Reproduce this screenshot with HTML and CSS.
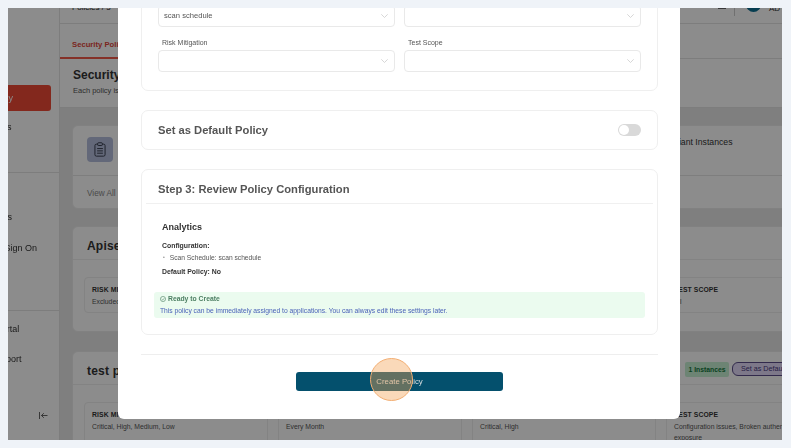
FILE: index.html
```html
<!DOCTYPE html>
<html lang="en">
<head>
<meta charset="utf-8">
<title>Create Security Policy</title>
<link rel="stylesheet" href="styles.css">
</head>
<body>
<div class="screen">
  <div class="app">
    <aside class="sidebar">
      <div class="logo">Apisec</div>
      <nav class="nav">
        <div class="nav-item nav-active">Security Policy</div>
        <div class="nav-item nav-analytics">Instances</div>
        <div class="nav-group">
          <div class="nav-item nav-users">Integrations</div>
          <div class="nav-item nav-sso">Single Sign On</div>
        </div>
        <div class="nav-group">
          <div class="nav-item nav-portal">Trust Portal</div>
          <div class="nav-item nav-support">Get Support</div>
        </div>
      </nav>
      <div class="collapse">
        <svg width="9" height="7" viewBox="0 0 9 7" fill="none" stroke="#3f3f3f" stroke-width="0.8"><path d="M0.5 0v7M8.5 3.5H2.5M4.8 1.2 2.5 3.5l2.3 2.3"/></svg>
      </div>
    </aside>
    <main class="main">
      <header class="topbar">
        <span class="crumb">Policies / 5</span>
        <div class="top-right">
          <span class="top-icon"></span>
          <span class="top-sep"></span>
          <span class="avatar"></span>
          <span class="top-name">AD</span>
        </div>
      </header>
      <div class="tabs"><span class="tab">Security Policies</span></div>
      <section class="intro">
        <h1 class="intro-title">Security Policies</h1>
        <p class="intro-sub">Each policy is applied to the assigned applications.</p>
      </section>
      <div class="content">
        <section class="card stat-card">
          <div class="stat-top">
            <span class="stat-icon">
              <svg width="12" height="15" viewBox="0 0 13 16" fill="none" stroke="#2f3444" stroke-width="1"><rect x="1" y="2.2" width="11" height="13" rx="1.6"/><rect x="4" y="0.7" width="5" height="3" rx="0.8" fill="#b4bedd"/><path d="M3.4 7h6.2M3.4 9.5h6.2M3.4 12h6.2"/></svg>
            </span>
            <span class="stat-label">Non-Compliant Instances</span>
          </div>
          <div class="stat-foot">View All</div>
        </section>
        <section class="card policy">
          <div class="policy-head"><h2 class="policy-title">Apisec Default</h2></div>
          <div class="cells">
            <div class="cell short"><div class="cell-key">RISK MITIGATION</div><div class="cell-val">Excluded</div></div>
            <div class="cell short"></div>
            <div class="cell short"></div>
            <div class="cell short"><div class="cell-key">TEST SCOPE</div><div class="cell-val">All</div></div>
          </div>
        </section>
        <section class="card policy">
          <div class="policy-head">
            <h2 class="policy-title">test policy</h2>
            <div class="policy-actions">
              <span class="badge">1 Instances</span>
              <span class="pill">Set as Default</span>
            </div>
          </div>
          <div class="cells">
            <div class="cell"><div class="cell-key">RISK MITIGATION</div><div class="cell-val">Critical, High, Medium, Low</div></div>
            <div class="cell"><div class="cell-key">&nbsp;</div><div class="cell-val">Every Month</div></div>
            <div class="cell"><div class="cell-key">&nbsp;</div><div class="cell-val">Critical, High</div></div>
            <div class="cell"><div class="cell-key">TEST SCOPE</div><div class="cell-val">Configuration issues, Broken authentication, Data exposure</div></div>
          </div>
        </section>
      </div>
    </main>
  </div>
  <div class="overlay"></div>
  <div class="modal">
    <section class="m-card form-card">
      <div class="form-grid">
        <div class="field">
          <div class="select"><span>scan schedule</span><svg class="chev" width="7" height="4" viewBox="0 0 7 4" fill="none" stroke="#cdcdcd" stroke-width="0.8"><path d="M0.3 0.3 3.5 3.5 6.7 0.3"/></svg></div>
        </div>
        <div class="field">
          <div class="select"><span></span><svg class="chev" width="7" height="4" viewBox="0 0 7 4" fill="none" stroke="#cdcdcd" stroke-width="0.8"><path d="M0.3 0.3 3.5 3.5 6.7 0.3"/></svg></div>
        </div>
        <div class="field">
          <label class="f-label">Risk Mitigation</label>
          <div class="select"><span></span><svg class="chev" width="7" height="4" viewBox="0 0 7 4" fill="none" stroke="#cdcdcd" stroke-width="0.8"><path d="M0.3 0.3 3.5 3.5 6.7 0.3"/></svg></div>
        </div>
        <div class="field">
          <label class="f-label">Test Scope</label>
          <div class="select"><span></span><svg class="chev" width="7" height="4" viewBox="0 0 7 4" fill="none" stroke="#cdcdcd" stroke-width="0.8"><path d="M0.3 0.3 3.5 3.5 6.7 0.3"/></svg></div>
        </div>
      </div>
    </section>
    <section class="m-card default-card">
      <h3 class="m-title">Set as Default Policy</h3>
      <span class="toggle"><span class="knob"></span></span>
    </section>
    <section class="m-card review-card">
      <h3 class="m-title review-title">Step 3: Review Policy Configuration</h3>
      <div class="review-body">
        <h4 class="r-name">Analytics</h4>
        <div class="r-bold">Configuration:</div>
        <ul class="r-list"><li>Scan Schedule: scan schedule</li></ul>
        <div class="r-bold r-default">Default Policy: No</div>
      </div>
      <div class="ready">
        <div class="ready-title">
          <svg width="6" height="6" viewBox="0 0 7 7" fill="none" stroke="#4d7f63" stroke-width="0.7"><circle cx="3.5" cy="3.5" r="3"/><path d="M2 3.6 3.1 4.7 5 2.6"/></svg>
          Ready to Create
        </div>
        <div class="ready-text">This policy can be immediately assigned to applications. You can always edit these settings later.</div>
      </div>
    </section>
    <footer class="m-footer">
      <button class="create" type="button">Create Policy</button>
    </footer>
  </div>
  <div class="spot"></div>
</div>
</body>
</html>
```
FILE: styles.css
```css
* { box-sizing: border-box; }
html, body { margin: 0; height: 100%; }
body {
  background: #eff3f8;
  padding: 8px 9px 8px 8px;
  font-family: "Liberation Sans", Arial, sans-serif;
  overflow: hidden;
}
h1, h2, h3, h4, p, ul { margin: 0; padding: 0; }

.screen {
  position: relative;
  width: 774px;
  height: 432px;
  overflow: hidden;
  filter: blur(0.35px);
}
.app { display: flex; width: 100%; height: 100%; background: #fff; }

/* sidebar */
.sidebar {
  position: relative;
  flex: 0 0 52px;
  border-right: 1px solid #e4e4e4;
  overflow: hidden;
  color: #333;
  font-size: 9px;
  white-space: nowrap;
}
.logo { margin: -14px 0 0 -20px; font-size: 15px; font-weight: 700; line-height: 17px; color: #222; }
.nav { margin-top: 74px; font-weight: 500; }
.nav-item { margin-left: -43px; line-height: 12px; }
.nav-active {
  display: flex;
  align-items: center;
  justify-content: flex-end;
  margin-left: -10px;
  width: 53px;
  height: 26px;
  padding-right: 38px;
  border-radius: 3px;
  background: #ef4a36;
  color: #fff;
  font-size: 9px;
}
.nav-analytics { margin-top: 10px; margin-left: -35px; }
.nav-group { margin-top: 39px; padding-bottom: 0; border-top: 1px solid #e4e4e4; width: 52px; }
.nav-users { margin-top: 38px; margin-left: -43px; }
.nav-sso { margin-top: 19px; margin-left: -31px; }
.nav-group + .nav-group { margin-top: 56px; }
.nav-portal { margin-top: 12px; margin-left: -35px; }
.nav-support { margin-top: 18px; margin-left: -35px; }
.collapse { position: absolute; left: 31px; top: 404px; line-height: 0; }

/* main */
.main { flex: 0 0 820px; color: #333; }
.topbar {
  display: flex;
  align-items: center;
  justify-content: space-between;
  height: 16px;
  border-bottom: 1px solid #e4e4e4;
  padding: 0 2px 0 12px;
  width: 722px;
  overflow: hidden;
}
.crumb { font-size: 8px; margin-top: -17px; font-weight: 500; }
.top-right { display: flex; align-items: center; gap: 8px; }
.top-icon { width: 8px; height: 1px; margin-top: -14px; background: #666; }
.top-sep { width: 1px; height: 11px; margin-top: -10px; background: #ccc; }
.avatar { width: 15px; height: 15px; margin: -23px 0 0 3px; border-radius: 50%; background: #0c6f92; }
.top-name { font-size: 8px; margin-top: -14px; margin-left: 0; }
.tabs { height: 35px; border-bottom: 1px solid #e4e4e4; }
.tab {
  display: block;
  width: 100px;
  height: 35px;
  padding: 15px 0 0 12px;
  border-bottom: 2px solid #f25a4a;
  color: #e0463a;
  font-size: 7.7px;
  font-weight: 700;
  line-height: 12px;
  white-space: nowrap;
}
.intro { height: 49px; padding: 7px 13px; border-bottom: 1px solid #e4e4e4; }
.intro-title { font-size: 12px; line-height: 18px; font-weight: 700; color: #333; }
.intro-sub { font-size: 7.5px; line-height: 12px; color: #555; margin-top: 1px; }
.content { background: #e8e8e8; padding: 17px 12px; }
.card { width: 790px; border: 1px solid #ececec; border-radius: 6px; background: #fff; }
.card + .card { margin-top: 17px; }
.policy + .policy { margin-top: 19px; }
.stat-card { height: 84px; display: flex; flex-direction: column; }
.stat-top { flex: 1; display: flex; align-items: flex-start; gap: 8px; padding: 11px 14px 0; border-bottom: 1px solid #e6e6e6; }
.stat-icon { display: flex; align-items: center; justify-content: center; width: 26px; height: 25px; border-radius: 4px; background: #b4bedd; }
.stat-label { margin-left: 514px; margin-top: 0; font-size: 8.7px; font-weight: 500; line-height: 11px; white-space: nowrap; }
.stat-foot { height: 32px; padding: 12px 14px 0; font-size: 8.2px; line-height: 12px; color: #888; }
.policy-head {
  display: flex;
  align-items: center;
  justify-content: space-between;
  height: 33px;
  padding: 0 56px 0 14px;
  border-bottom: 1px solid #eee;
}
.policy-title { margin-top: 6px; font-size: 12px; font-weight: 700; color: #333; letter-spacing: 0.2px; }
.policy-actions { display: flex; align-items: center; gap: 3px; margin-top: 2px; }
.badge { display: block; height: 15px; padding: 0 3.5px; border-radius: 2px; background: #c7f0d3; color: #13773c; font-size: 6.8px; font-weight: 700; line-height: 15px; white-space: nowrap; }
.pill { display: block; height: 14px; width: 73px; padding: 0 8px; border: 1px solid #5b4d8a; border-radius: 6px; background: #e4dbfa; color: #47397a; font-size: 7.2px; line-height: 12px; white-space: nowrap; }
.cells { display: grid; grid-template-columns: repeat(4, 184px); column-gap: 10px; padding: 17px 11px 18px; }
.cell { height: 60px; padding: 6px 7px; border: 1px solid #eee; border-radius: 4px; }
.short { height: 36px; }
.cell-key { font-size: 6.8px; font-weight: 700; line-height: 12px; color: #333; letter-spacing: 0.1px; white-space: nowrap; }
.cell-val { font-size: 6.8px; line-height: 11px; color: #555; }

/* overlay + modal */
.overlay { position: absolute; inset: 0; background: rgba(0, 0, 0, 0.45); }
.modal {
  position: absolute;
  left: 110px;
  top: 0;
  width: 562px;
  height: 411px;
  padding: 0 23px;
  border-radius: 0 0 6px 6px;
  background: #fff;
  overflow: hidden;
}
.m-card { width: 517px; border: 1px solid #efefef; border-radius: 7px; background: #fff; }
.form-card { height: 116px; margin-top: -33px; padding: 15px 16px 0; }
.form-grid { display: grid; grid-template-columns: 237px 237px; column-gap: 9px; row-gap: 9px; }
.f-label { display: block; height: 14px; padding-left: 4px; font-size: 7px; line-height: 13px; color: #555; }
.field:nth-child(-n+2) { padding-top: 14px; }
.select {
  display: flex;
  align-items: center;
  justify-content: space-between;
  height: 22px;
  padding: 0 6px 1px 5px;
  border: 1px solid #e9e9e9;
  border-radius: 4px;
  font-size: 7.6px;
  color: #555;
}
.m-title { font-size: 11.2px; font-weight: 700; line-height: 16px; color: #555; }
.default-card {
  display: flex;
  align-items: center;
  justify-content: space-between;
  height: 40px;
  margin-top: 19px;
  padding: 0 16px;
}
.toggle { display: block; width: 23px; height: 12px; padding: 1px; border-radius: 6px; background: #d9d9d9; }
.knob { display: block; width: 10px; height: 10px; border-radius: 50%; background: #fff; }
.review-card { height: 166px; margin-top: 19px; padding: 0 4px; }
.review-title { height: 34px; padding: 11px 12px 0; border-bottom: 1px solid #f0f0f0; line-height: 16px; }
.review-body { padding: 17px 16px 0; color: #333; }
.r-name { font-size: 9px; font-weight: 700; line-height: 12px; color: #333; }
.r-bold { font-size: 6.9px; font-weight: 700; line-height: 10px; }
.r-name + .r-bold { margin-top: 8px; }
.r-default { margin-top: 3px; }
.r-list { list-style: none; font-size: 6.7px; line-height: 12px; color: #555; padding-left: 1px; }
.r-list li::before { content: "\2022"; margin-right: 5px; color: #888; font-size: 5px; vertical-align: 1px; }
.ready { margin: 15px 8px 0; width: 491px; height: 26px; padding: 2px 6px; border-radius: 3px; background: #ebfbef; }
.ready-title { display: flex; align-items: center; gap: 2px; font-size: 6.8px; font-weight: 700; line-height: 10px; color: #4d7f63; }
.ready-text { margin-top: 1px; font-size: 6.73px; line-height: 11px; color: #4a62b8; white-space: nowrap; }
.m-footer { display: flex; justify-content: center; margin-top: 19px; padding-top: 17px; border-top: 1px solid #eee; width: 517px; }
.create {
  width: 207px;
  height: 19px;
  border: 0;
  border-radius: 3px;
  background: #04506d;
  color: #d9dee0;
  font: 7.8px/19px "Liberation Sans", Arial, sans-serif;
  padding: 0;
}
.spot {
  position: absolute;
  left: 362px;
  top: 350px;
  width: 43px;
  height: 43px;
  border-radius: 50%;
  border: 1.5px solid #f3ae72;
  background: rgba(242, 160, 80, 0.4);
}
```
